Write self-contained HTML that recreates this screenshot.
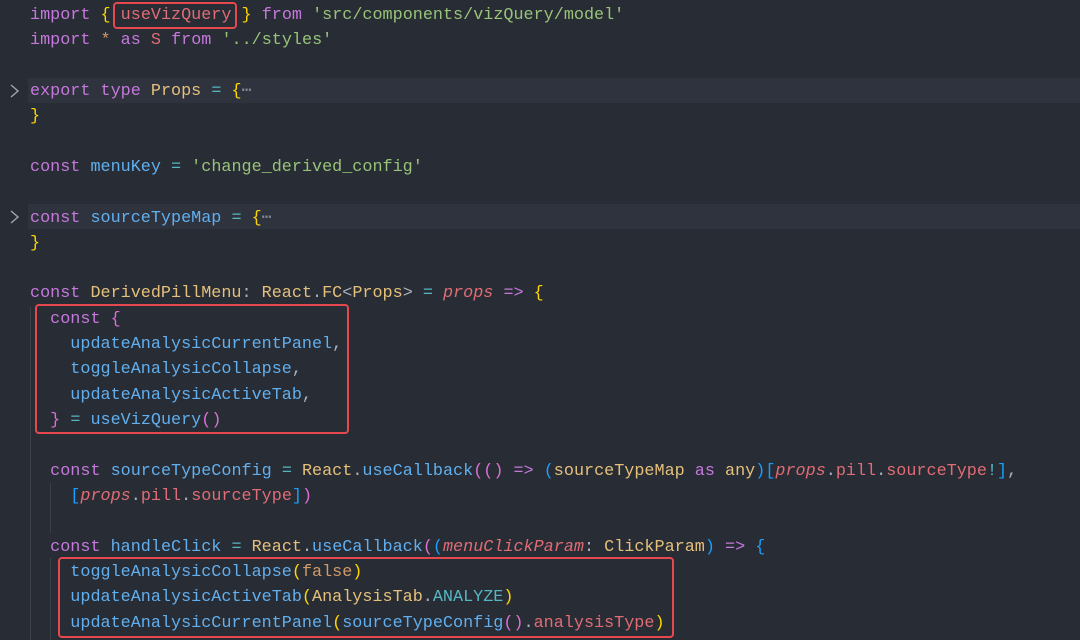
<!DOCTYPE html>
<html><head><meta charset="utf-8"><style>
html,body{margin:0;padding:0;background:#282c34;width:1080px;height:640px;overflow:hidden}
.ed{position:relative;width:1080px;height:640px;background:#282c34}
pre{position:absolute;left:30px;top:3px;margin:0;font-family:"Liberation Mono",monospace;font-size:16.8px;line-height:25.32px;color:#abb2bf;white-space:pre}
.k{color:#c678dd}.s{color:#98c379}.y{color:#ffd700}.b{color:#61afef}.t{color:#e5c07b}.r{color:#e06c75}.o{color:#56b6c2}.n{color:#d19a66}.m{color:#c678dd}.i{font-style:italic;color:#e06c75}.d{color:#abb2bf}.p{color:#da70d6}.bl{color:#179fff}
.band{position:absolute;left:28px;width:1052px;height:25px;background:#2f333d}
.chev{position:absolute;left:9px}
.g{position:absolute;width:1px;background:#3b404a}
.box{position:absolute;border:2.5px solid #e5484d;border-radius:4px;box-sizing:border-box}
</style></head><body><div class="ed">
<div class="band" style="top:78px"></div>
<div class="band" style="top:204px"></div>
<svg class="chev" style="top:83px" width="12" height="16"><polyline points="2,2 9,8 2,14" fill="none" stroke="#a0a6ae" stroke-width="1.4"/></svg>
<svg class="chev" style="top:209px" width="12" height="16"><polyline points="2,2 9,8 2,14" fill="none" stroke="#a0a6ae" stroke-width="1.4"/></svg>
<div class="g" style="left:30px;top:307px;height:333px"></div>
<div class="g" style="left:50px;top:483px;height:50px"></div>
<div class="g" style="left:50px;top:558px;height:82px"></div>
<pre><span class="k">import</span> <span class="y">{</span> <span class="r">useVizQuery</span> <span class="y">}</span> <span class="k">from</span> <span class="s">'src/components/vizQuery/model'</span>
<span class="k">import</span> <span class="n">*</span> <span class="k">as</span> <span class="r">S</span> <span class="k">from</span> <span class="s">'../styles'</span>

<span class="k">export</span> <span class="k">type</span> <span class="t">Props</span> <span class="o">=</span> <span class="y">{</span><span style="color:#7f848e">⋯</span>
<span class="y">}</span>

<span class="k">const</span> <span class="b">menuKey</span> <span class="o">=</span> <span class="s">'change_derived_config'</span>

<span class="k">const</span> <span class="b">sourceTypeMap</span> <span class="o">=</span> <span class="y">{</span><span style="color:#7f848e">⋯</span>
<span class="y">}</span>

<span class="k">const</span> <span class="t">DerivedPillMenu</span><span class="d">:</span> <span class="t">React</span><span class="d">.</span><span class="t">FC</span><span class="d">&lt;</span><span class="t">Props</span><span class="d">&gt;</span> <span class="o">=</span> <span class="i">props</span> <span class="k">=&gt;</span> <span class="y">{</span>
  <span class="k">const</span> <span class="p">{</span>
    <span class="b">updateAnalysicCurrentPanel</span><span class="d">,</span>
    <span class="b">toggleAnalysicCollapse</span><span class="d">,</span>
    <span class="b">updateAnalysicActiveTab</span><span class="d">,</span>
  <span class="p">}</span> <span class="o">=</span> <span class="b">useVizQuery</span><span class="p">()</span>

  <span class="k">const</span> <span class="b">sourceTypeConfig</span> <span class="o">=</span> <span class="t">React</span><span class="d">.</span><span class="b">useCallback</span><span class="p">(()</span> <span class="k">=&gt;</span> <span class="bl">(</span><span class="t">sourceTypeMap</span> <span class="k">as</span> <span class="t">any</span><span class="bl">)[</span><span class="i">props</span><span class="d">.</span><span class="r">pill</span><span class="d">.</span><span class="r">sourceType</span><span class="o">!</span><span class="bl">]</span><span class="d">,</span>
    <span class="bl">[</span><span class="i">props</span><span class="d">.</span><span class="r">pill</span><span class="d">.</span><span class="r">sourceType</span><span class="bl">]</span><span class="p">)</span>

  <span class="k">const</span> <span class="b">handleClick</span> <span class="o">=</span> <span class="t">React</span><span class="d">.</span><span class="b">useCallback</span><span class="p">(</span><span class="bl">(</span><span class="i">menuClickParam</span><span class="d">:</span> <span class="t">ClickParam</span><span class="bl">)</span> <span class="k">=&gt;</span> <span class="bl">{</span>
    <span class="b">toggleAnalysicCollapse</span><span class="y">(</span><span class="n">false</span><span class="y">)</span>
    <span class="b">updateAnalysicActiveTab</span><span class="y">(</span><span class="t">AnalysisTab</span><span class="d">.</span><span class="o">ANALYZE</span><span class="y">)</span>
    <span class="b">updateAnalysicCurrentPanel</span><span class="y">(</span><span class="b">sourceTypeConfig</span><span class="p">()</span><span class="d">.</span><span class="r">analysisType</span><span class="y">)</span>
</pre>
<div class="box" style="left:113px;top:2px;width:124px;height:27px"></div>
<div class="box" style="left:35px;top:304px;width:314px;height:130px"></div>
<div class="box" style="left:58px;top:557px;width:616px;height:81px"></div>
</div></body></html>
